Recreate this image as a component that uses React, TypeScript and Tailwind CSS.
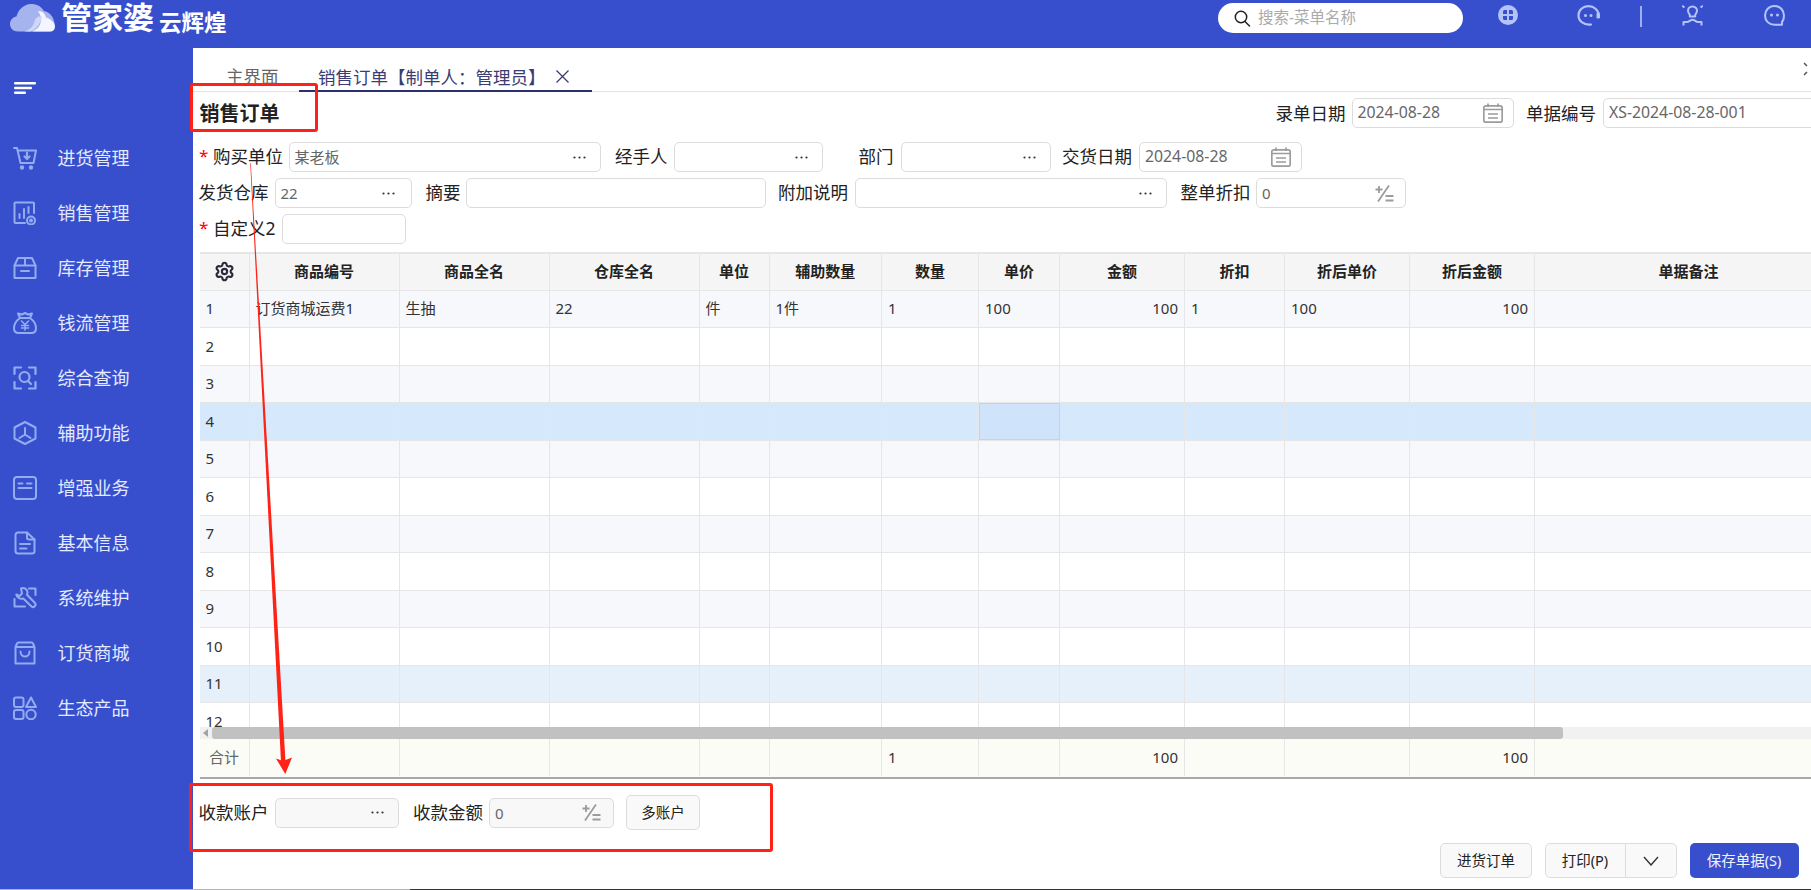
import React from 'react';
import { Settings } from 'lucide-react';

const fontStack = "font-['Noto_Sans','Noto_Sans_CJK_SC','Liberation_Sans',sans-serif]";

const iconProps = {
    width: 24,
    height: 24,
    viewBox: '0 0 24 24',
    fill: 'none',
    stroke: '#93acf0',
    strokeWidth: 2,
    strokeLinecap: 'round' as const,
    strokeLinejoin: 'round' as const,
};

const menu: { label: string; icon: React.ReactNode }[] = [
    {
        label: '进货管理',
        icon: (
            <svg {...iconProps}>
                <path d="M1 2h3l3.500 15h13l2.500-12.500H5" />
                <path d="M14 6.500v6M11.500 10.500l2.500 2.500 2.500-2.500" strokeWidth={2.200} />
                <circle cx="9" cy="21.500" r="1.200" fill="#93acf0" />
                <circle cx="18" cy="21.500" r="1.200" fill="#93acf0" />
            </svg>
        ),
    },
    {
        label: '销售管理',
        icon: (
            <svg {...iconProps}>
                <path d="M12 22H2.500a1 1 0 0 1-1-1V2.500a1 1 0 0 1 1-1h17.500a1 1 0 0 1 1 1V12" />
                <path d="M6.500 17v-4M11 17V8M15.500 12V6" />
                <circle cx="18" cy="19.500" r="4" />
                <circle cx="18" cy="19.500" r="1" />
            </svg>
        ),
    },
    {
        label: '库存管理',
        icon: (
            <svg {...iconProps}>
                <path d="M1.500 9.500 5 2h14l3.500 7.500V22h-21z" />
                <path d="M1.500 9.500h21M12 2v7.500M8 15h8" />
            </svg>
        ),
    },
    {
        label: '钱流管理',
        icon: (
            <svg {...iconProps}>
                <path d="M7 7 5 2.500 9 3.500 12 2l3 1.500 4-1-2 4.500" />
                <path d="M7 7h10c3.500 2.500 6 6 6 10 0 3-1.500 5-4.500 5h-13C2.500 22 1 20 1 17c0-4 2.500-7.500 6-10z" />
                <path d="m8.500 10 3.500 3.500 3.500-3.500M12 13.500V19M8.500 14.500h7M8.500 17h7" strokeWidth={1.600} />
            </svg>
        ),
    },
    {
        label: '综合查询',
        icon: (
            <svg {...iconProps}>
                <path d="M8 1.500H1.500V8M16 1.500h6.500V8M1.500 16v6.500H8M22.500 16v6.500H16" strokeWidth={2.200} />
                <circle cx="11.500" cy="11" r="5" strokeWidth={2.200} />
                <path d="m15 15 3 3" strokeWidth={2.200} />
            </svg>
        ),
    },
    {
        label: '辅助功能',
        icon: (
            <svg {...iconProps}>
                <path d="M12 1 22.500 6.500v11L12 23 1.500 17.500v-11z" />
                <path d="M12 7v6.500M12 13.500 6.500 17M12 13.500l5.500 3.500" />
            </svg>
        ),
    },
    {
        label: '增强业务',
        icon: (
            <svg {...iconProps}>
                <rect x="1" y="1" width="22" height="22" rx="3" />
                <path d="M5.500 7.500h4M14 7.500h4.500M5.500 12h13" />
            </svg>
        ),
    },
    {
        label: '基本信息',
        icon: (
            <svg {...iconProps}>
                <path d="M14 1.500H5a2.500 2.500 0 0 0-2.500 2.500v16A2.500 2.500 0 0 0 5 22.500h14a2.500 2.500 0 0 0 2.500-2.500V8.500z" />
                <path d="M14 1.500v5a2 2 0 0 0 2 2h5.500M7 13h10M7 17.500h6.500" />
            </svg>
        ),
    },
    {
        label: '系统维护',
        icon: (
            <svg {...iconProps}>
                <path d="M8 2.500c3-1.500 6.500.500 6.500 4 0 1-.2 1.500-.500 2.200l8 8.300a2.500 2.500 0 0 1-3.500 3.500l-8.200-8c-2.800 1-6.300-.500-7-4l3.200 1.500 2.500-2.500z" />
                <path d="M16 2.500h6.500V9M1.500 13v7.500H12" />
            </svg>
        ),
    },
    {
        label: '订货商城',
        icon: (
            <svg {...iconProps}>
                <path d="M2.500 6 4 2.500A1.500 1.500 0 0 1 5.500 1.500h13A1.500 1.500 0 0 1 20 2.500L21.500 6v16.500h-19zM2.500 6h19" />
                <path d="M7.500 10.500c0 6.500 9 6.500 9 0" />
            </svg>
        ),
    },
    {
        label: '生态产品',
        icon: (
            <svg {...iconProps}>
                <rect x="1" y="1.500" width="9.500" height="9.500" rx="2" />
                <path d="m18 1.500 5 9.500H13z" />
                <rect x="1" y="14" width="9.500" height="9" rx="2" />
                <circle cx="18" cy="18.500" r="4.700" />
            </svg>
        ),
    },
];

const Dots = () => (
    <svg width="13" height="3" viewBox="0 0 13 3" className="shrink-0">
        <circle cx="1.500" cy="1.500" r="1.100" fill="#333" />
        <circle cx="6.500" cy="1.500" r="1.100" fill="#333" />
        <circle cx="11.500" cy="1.500" r="1.100" fill="#333" />
    </svg>
);

const CalendarIcon = () => (
    <svg width="20" height="20" viewBox="0 0 20 20" fill="none" stroke="#9c9c9c" strokeWidth="1.700" className="shrink-0">
        <rect x="0.800" y="2.800" width="18.400" height="16.400" rx="2" />
        <path d="M0.800 6.500h18.400M5 0.500v3.500M15 0.500v3.500M5 11h10M5 15h10" />
    </svg>
);

const RateIcon = () => (
    <svg width="19" height="17" viewBox="0 0 19 17" fill="none" stroke="#9c9c9c" strokeWidth="1.800" className="shrink-0">
        <path d="M0.500 4.500h7M4 1v7M14 0.500 3 16.500M10.500 11h8M10.500 15.500h8" />
    </svg>
);

const Label = ({ className = '', children }: { className?: string; children: React.ReactNode }) => (
    <span className={`shrink-0 whitespace-nowrap text-[17.500px] leading-none text-[#222] ${className}`}>{children}</span>
);

const Star = () => <span className="mt-[-4px] w-[15px] shrink-0 pl-[1px] text-[17px] leading-none text-[#f00]">*</span>;

const Box = ({ className = '', children }: { className?: string; children?: React.ReactNode }) => (
    <div className={`flex h-[30px] shrink-0 items-center justify-between rounded-[5px] border border-[#dcdcdc] pl-[5px] text-[#666] ${className}`}>
        {children}
    </div>
);

const gridCols = 'grid grid-cols-[50px_150px_150px_150px_70px_112.500px_97px_81px_125px_100px_125px_125px_308px]';
const headers = [
    '商品编号', '商品全名', '仓库全名', '单位', '辅助数量', '数量', '单价', '金额', '折扣', '折后单价', '折后金额', '单据备注',
];
const rightAligned = [8, 11];
const firstRow = ['1', '订货商城运费1', '生抽', '22', '件', '1件', '1', '100', '100', '1', '100', '100', ''];
const totals = ['合计', '', '', '', '', '', '1', '', '100', '', '', '100', ''];

const rowBg = (n: number) => {
    if (n === 4) return 'bg-[#d6e9fc]';
    if (n === 11) return 'bg-[#e6f0fa]';
    if (n === 1 || n === 3 || n === 5 || n === 7 || n === 9) return 'bg-[#f7f8fc]';
    return 'bg-white';
};

const App: React.FC = () => {
    const rows = Array.from({ length: 12 }, (_, i) => i + 1);

    return (
        <div className={`relative flex h-[890px] w-[1811px] flex-col overflow-hidden bg-white ${fontStack}`}>
            {/* top bar */}
            <header className="flex h-[48px] shrink-0 items-start bg-[#374fcd]">
                <svg width="46" height="28" viewBox="0 0 46 28" className="ml-[9.500px] mt-[4px] shrink-0">
                    <path d="M8 27.500C3 27.500 0 24 0 20c0-4 3-7 6.500-7.500C8 6 13 1 20 0c6-.5 11 2 14 7 5 1 9 5 10 10 2 5-1 10.500-6 10.500z" fill="#a5b3ef" />
                    <path d="M22 27.500c6-2 9-7 9-12 0-3-1-6-3-8 4-1 7 2 8 6 4 1 9 5 9 9 0 3-2 5-5 5z" fill="#f3f5ff" />
                    <path d="M14 27.500c6-1 10-6 11-12 2-3 5-4 7-3-1 6-5 12-11 15z" fill="#cfd7f7" />
                </svg>
                <span className="ml-[5.500px] w-[95px] shrink-0 whitespace-nowrap text-[31px] font-bold leading-[34px] text-white">管家婆</span>
                <span className="ml-[3px] mt-[9px] w-[68px] shrink-0 whitespace-nowrap text-[22.500px] font-bold leading-[27px] text-white">云辉煌</span>
                <div className="ml-[991px] mt-[3px] flex h-[30px] w-[245px] shrink-0 items-center rounded-[15px] bg-white pl-[16px]">
                    <svg width="17" height="17" viewBox="0 0 17 17" fill="none" stroke="#222" strokeWidth="1.500" className="shrink-0">
                        <circle cx="7" cy="7" r="5.700" />
                        <path d="m11 11.500 4.500 4.500" strokeLinecap="round" />
                    </svg>
                    <span className="ml-[7px] whitespace-nowrap text-[15.500px] leading-none text-[#aaa]">搜索-菜单名称</span>
                </div>
                <svg width="20" height="20" viewBox="0 0 20 20" className="ml-[35px] mt-[5px] shrink-0">
                    <circle cx="10" cy="10" r="10" fill="#b5c4f7" />
                    <path d="M5 6.500A1.500 1.500 0 0 1 6.500 5H9v4H5zM11 5h2.500A1.500 1.500 0 0 1 15 6.500V9h-4zM5 11h4v4H6.500A1.500 1.500 0 0 1 5 13.500zM11 11h4v2.500a1.500 1.500 0 0 1-1.500 1.500H11z" fill="#374fcd" />
                </svg>
                <svg width="23" height="21" viewBox="0 0 23 21" fill="none" stroke="#b5c4f7" strokeWidth="2.200" className="ml-[59px] mt-[5px] shrink-0">
                    <path d="M14 19.500C7 20.500 1.500 16 1.500 10.500 1.500 5 6 1.200 11.500 1.200S21.500 5 21.500 10" strokeLinecap="round" />
                    <rect x="19.500" y="7.500" width="3.500" height="6" rx="1.200" fill="#b5c4f7" stroke="none" />
                    <circle cx="8.500" cy="10.500" r="1.500" fill="#b5c4f7" stroke="none" />
                    <circle cx="14" cy="10.500" r="1.500" fill="#b5c4f7" stroke="none" />
                </svg>
                <div className="ml-[40px] mt-[6px] h-[21px] w-[2px] shrink-0 bg-[#9cb0f0]" />
                <svg width="21" height="21" viewBox="0 0 21 21" fill="none" stroke="#b5c4f7" strokeWidth="2" className="ml-[40px] mt-[5px] shrink-0">
                    <path d="M10.500 1.500c-2.800 0-4.500 1.900-4.500 4.200 0 1.900 1 2.800 1.800 4.100v1.700h5.400V9.800c.8-1.300 1.800-2.200 1.800-4.100 0-2.300-1.700-4.200-4.500-4.200z" strokeLinejoin="round" />
                    <path d="M.8 1.200l1 .8M20.200 1.200l-1 .8" strokeLinecap="round" />
                    <path d="M1.500 20.500v-3.500h3.500c2.200 0 3.300-2.300 5.500-2.300s3.300 2.300 5.500 2.300h3.500v3.500" strokeLinejoin="round" />
                </svg>
                <svg width="21" height="21" viewBox="0 0 21 21" fill="none" stroke="#b5c4f7" strokeWidth="2" className="ml-[61px] mt-[5px] shrink-0">
                    <path d="M18 19.800h-7.500C5 19.800 1 15.700 1 10.500S5 1 10.500 1 20 5.300 20 10.500c0 3-.7 5-2 6.500z" strokeLinejoin="round" />
                    <circle cx="7.500" cy="10" r="1.500" fill="#b5c4f7" stroke="none" />
                    <circle cx="13.500" cy="10" r="1.500" fill="#b5c4f7" stroke="none" />
                </svg>
            </header>

            <div className="flex min-h-0 flex-1">
                {/* sidebar */}
                <aside className="w-[193px] shrink-0 bg-[#374fcd] pt-[34px]">
                    <svg width="22" height="12" viewBox="0 0 22 12" className="ml-[14px] block">
                        <rect width="22" height="2.500" rx="1" fill="#fff" />
                        <rect y="4.700" width="18" height="2.500" rx="1" fill="#fff" />
                        <rect y="9.500" width="12" height="2.500" rx="1" fill="#fff" />
                    </svg>
                    <nav className="mt-[36.500px]">
                        {menu.map((m) => (
                            <div key={m.label} className="flex h-[55px] items-center pl-[13px]">
                                {m.icon}
                                <span className="ml-[20.500px] text-[18px] leading-none text-[#e4eaff]">{m.label}</span>
                            </div>
                        ))}
                    </nav>
                </aside>

                <main className="flex min-w-0 flex-1 flex-col overflow-hidden">
                    {/* tabs */}
                    <div className="relative flex h-[43.500px] shrink-0 items-end border-b border-[#e2e2e2] pl-[33px]">
                        <span className="mb-[3px] text-[17.500px] leading-[24px] text-[#666]">主界面</span>
                        <div className="ml-[20px] mb-[-1px] flex h-[30px] w-[293px] items-start border-b-2 border-[#2a2f6d] pl-[19.500px]">
                            <span className="mt-[3px] whitespace-nowrap text-[17.500px] leading-[24px] text-[#3b3d72]">销售订单【制单人：管理员】</span>
                            <svg width="13" height="13" viewBox="0 0 13 13" stroke="#3b3d72" strokeWidth="1.300" className="ml-[10px] mt-[8px] shrink-0">
                                <path d="M0.500 0.500 12.500 12.500M12.500 0.500 0.500 12.500" />
                            </svg>
                        </div>
                        <svg width="8" height="14" viewBox="0 0 8 14" fill="none" stroke="#555" strokeWidth="1.500" className="absolute right-0 top-[14px]">
                            <path d="m1 1 3 3M4 10l-3 3" />
                        </svg>
                    </div>

                    {/* title + bill info */}
                    <div className="flex h-[50.500px] shrink-0 items-start pl-[6.500px] pt-[6.500px]">
                        <h1 className="mt-[1px] w-[80px] shrink-0 text-[20px] font-bold leading-[30px] text-[#222]">销售订单</h1>
                        <Label className="ml-[996px] mt-[7px]">录单日期</Label>
                        <Box className="ml-[6px] w-[162px] pr-[10px] text-[15.800px]">
                            2024-08-28
                            <CalendarIcon />
                        </Box>
                        <Label className="ml-[12.500px] mt-[7px]">单据编号</Label>
                        <Box className="ml-[7px] w-[300px] text-[15.800px]">XS-2024-08-28-001</Box>
                    </div>

                    {/* form rows */}
                    <div className="flex h-[30px] shrink-0 items-center pl-[5px]">
                        <Star />
                        <Label>购买单位</Label>
                        <Box className="ml-[5.500px] w-[312px] pr-[14px] text-[15px]">
                            某老板
                            <Dots />
                        </Box>
                        <Label className="ml-[14.500px]">经手人</Label>
                        <Box className="ml-[6px] w-[149px] pr-[14px]">
                            <span />
                            <Dots />
                        </Box>
                        <Label className="ml-[36px]">部门</Label>
                        <Box className="ml-[7px] w-[150.500px] pr-[14px]">
                            <span />
                            <Dots />
                        </Box>
                        <Label className="ml-[11px]">交货日期</Label>
                        <Box className="ml-[7px] w-[162.500px] pr-[10px] text-[15.800px]">
                            2024-08-28
                            <CalendarIcon />
                        </Box>
                    </div>
                    <div className="mt-[6px] flex h-[30px] shrink-0 items-center pl-[5.500px]">
                        <Label>发货仓库</Label>
                        <Box className="ml-[6px] w-[137px] pr-[16px] text-[15px]">
                            22
                            <Dots />
                        </Box>
                        <Label className="ml-[14px]">摘要</Label>
                        <Box className="ml-[5.500px] w-[299.500px]" />
                        <Label className="ml-[12.500px]">附加说明</Label>
                        <Box className="ml-[7px] w-[312px] pr-[14px]">
                            <span />
                            <Dots />
                        </Box>
                        <Label className="ml-[13.500px]">整单折扣</Label>
                        <Box className="ml-[5.500px] w-[150px] pr-[11px] text-[15px]">
                            0
                            <RateIcon />
                        </Box>
                    </div>
                    <div className="mt-[6px] flex h-[30px] shrink-0 items-center pl-[5px]">
                        <Star />
                        <Label>自定义2</Label>
                        <Box className="ml-[6px] w-[124px]" />
                    </div>

                    {/* grid */}
                    <div className="ml-[6.500px] mt-[8px] w-[1700px] shrink-0">
                        <div className={`${gridCols} h-[38.500px] border-t-2 border-b border-[#e6e6e6] bg-[#f5f5f5] text-[15px] font-semibold text-[#222]`}>
                            <div className="flex items-center justify-center border-r border-[#e6e6e6]">
                                <Settings size={21} strokeWidth={2.400} color="#2a2a3a" />
                            </div>
                            {headers.map((h) => (
                                <div key={h} className="flex items-center justify-center border-r border-[#e6e6e6] leading-none">
                                    {h}
                                </div>
                            ))}
                        </div>
                        <div className="h-[436px] overflow-hidden">
                            {rows.map((n) => (
                                <div key={n} className={`${gridCols} h-[37.500px] border-b border-[#e6e6e6] text-[15px] leading-none text-[#333] ${rowBg(n)}`}>
                                    {firstRow.map((cell, i) => {
                                        const selected = n === 4 && i === 7;
                                        const right = rightAligned.includes(i);
                                        return (
                                            <div
                                                key={i}
                                                className={`flex items-center border-r px-[6px] ${right ? 'justify-end' : ''} ${selected ? 'border border-[#b3d6fb] bg-[#cfe4fa]' : 'border-[#e6e6e6]'}`}
                                            >
                                                {i === 0 ? n : n === 1 ? cell : ''}
                                            </div>
                                        );
                                    })}
                                </div>
                            ))}
                        </div>
                        {/* scrollbar */}
                        <div className="flex h-[12.300px] items-stretch bg-[#f1f1f1]">
                            <div className="flex w-[12.500px] shrink-0 items-center justify-center">
                                <div className="h-0 w-0 border-y-[4px] border-r-[5px] border-y-transparent border-r-[#a3a3a3]" />
                            </div>
                            <div className="w-[1350.500px] rounded-[3px] bg-[#c1c1c1]" />
                        </div>
                        <div className={`${gridCols} h-[40.500px] border-b-2 border-[#a9a9a9] bg-[#fcfcf7] pb-[1.500px] text-[15px] leading-none text-[#333]`}>
                            {totals.map((t, i) => (
                                <div
                                    key={i}
                                    className={`flex items-center border-r border-[#e6e6e6] px-[6px] ${i === 0 ? 'justify-center text-[#666]' : ''} ${rightAligned.includes(i) ? 'justify-end' : ''}`}
                                >
                                    {t}
                                </div>
                            ))}
                        </div>
                    </div>

                    {/* receipt */}
                    <div className="mt-[16.200px] flex h-[35px] shrink-0 items-center pl-[5.500px]">
                        <Label>收款账户</Label>
                        <Box className="ml-[6px] w-[124.500px] bg-[#f8f8f8] pr-[14px]">
                            <span />
                            <Dots />
                        </Box>
                        <Label className="ml-[14px]">收款金额</Label>
                        <Box className="ml-[6px] w-[124.500px] bg-[#f8f8f8] pr-[12px] text-[15px]">
                            0
                            <RateIcon />
                        </Box>
                        <button className="ml-[12.500px] h-[35px] w-[74px] shrink-0 rounded-[5px] border border-[#dcdcdc] bg-[#f9f9f9] text-[14.500px] text-[#222]">
                            多账户
                        </button>
                    </div>

                    {/* actions */}
                    <div className="mt-[13px] flex h-[35px] shrink-0 items-center justify-start pl-[1247px]">
                        <button className="h-[35px] w-[92px] shrink-0 rounded-[5px] border border-[#dcdcdc] bg-[#f9f9f9] text-[14.500px] text-[#222]">
                            进货订单
                        </button>
                        <div className="ml-[12.500px] flex h-[35px] w-[132px] shrink-0 rounded-[5px] border border-[#dcdcdc] bg-[#f9f9f9]">
                            <button className="w-[80px] border-r border-[#dcdcdc] text-[14.500px] text-[#222]">打印(P)</button>
                            <button className="flex flex-1 items-center justify-center">
                                <svg width="16" height="10" viewBox="0 0 16 10" fill="none" stroke="#333" strokeWidth="1.400">
                                    <path d="m1 1 7 8 7-8" />
                                </svg>
                            </button>
                        </div>
                        <button className="ml-[13px] h-[35px] w-[109px] shrink-0 rounded-[5px] bg-[#374fcd] text-[14.500px] text-[#f0f3ff]">
                            保存单据(S)
                        </button>
                        <div className="ml-[12px] h-[35px] w-[40px] shrink-0 rounded-[5px] border border-[#dcdcdc] bg-[#f9f9f9]" />
                    </div>
                </main>
            </div>

            {/* screen edge */}
            <div className="flex h-[1px] shrink-0">
                <div className="w-[410px] bg-[#b5b5b5]" />
                <div className="flex-1 bg-[#333]" />
            </div>

            {/* red annotations */}
            <div className="absolute left-[189.500px] top-[83px] h-[49px] w-[128px] rounded-[3px] border-[3px] border-[#ff2217]" />
            <div className="absolute left-[189px] top-[783px] h-[69px] w-[584px] rounded-[3px] border-[3px] border-[#ff2217]" />
            <svg width="1811" height="890" viewBox="0 0 1811 890" className="pointer-events-none absolute left-0 top-0">
                <polygon points="250.200,163 250.800,163 285.500,762 281,762" fill="#ff2217" />
                <polygon points="276,758.500 283,761 292,757.500 285.300,774" fill="#ff2217" />
            </svg>
        </div>
    );
};

export default App;
